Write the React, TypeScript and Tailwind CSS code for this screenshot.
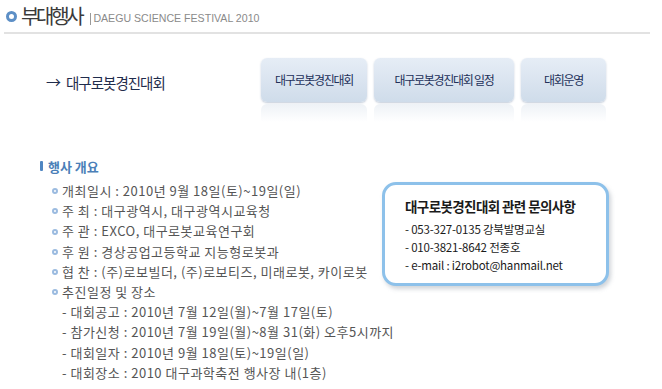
const items = [
  "개최일시 : 2010년 9월 18일(토)~19일(일)",
  "주 최 : 대구광역시, 대구광역시교육청",
  "주 관 : EXCO, 대구로봇교육연구회",
  "후 원 : 경상공업고등학교 지능형로봇과",
  "협 찬 : (주)로보빌더, (주)로보티즈, 미래로봇, 카이로봇",
  "추진일정 및 장소",
];

const schedule = [
  "- 대회공고 : 2010년 7월 12일(월)~7월 17일(토)",
  "- 참가신청 : 2010년 7월 19일(월)~8월 31(화) 오후5시까지",
  "- 대회일자 : 2010년 9월 18일(토)~19일(일)",
  "- 대회장소 : 2010 대구과학축전 행사장 내(1층)",
];

const tabs = [
  { label: "대구로봇경진대회", w: "w-[106px]" },
  { label: "대구로봇경진대회 일정", w: "w-[140px]" },
  { label: "대회운영", w: "w-[85px]" },
];

const App = () => {
  return (
    <div
      className="w-[662px] h-[389px] bg-white overflow-hidden text-[#555]"
      style={{ fontFamily: '"Noto Sans CJK KR", "Noto Sans", sans-serif' }}
    >
      {/* Title bar */}
      <div className="mx-[4px] w-[646px] h-[34px] border-b-2 border-[#e2e2e2] flex items-center pl-[2px] pb-[1px]">
        <span className="w-[11px] h-[11px] rounded-full border-[3px] border-[#5d8fc6] bg-white mt-[1px]" />
        <span className="ml-[4px] text-[20px] leading-none tracking-[-3.3px] text-[#3a3a3a]">
          부대행사
        </span>
        <span className="ml-[9px] mt-[6px] h-[12px] border-l border-[#999]" />
        <span
          className="ml-[2px] mt-[6px] text-[10.6px] leading-none text-[#8a8a8a]"
          style={{ fontFamily: '"Liberation Sans", Arial, sans-serif' }}
        >
          DAEGU SCIENCE FESTIVAL 2010
        </span>
      </div>

      {/* Sub menu row */}
      <div className="flex items-start mt-[24px]">
        <div className="ml-[46px] w-[214px] h-[44px] flex items-center pt-[5px] text-[14.5px] tracking-[-1px] text-[#1f2c4c]">
          <span className="text-[15px] mr-[6px]">→</span>
          대구로봇경진대회
        </div>
        <div className="ml-[1px] flex gap-[7px]">
          {tabs.map((t) => (
            <div key={t.label} className={`${t.w} flex flex-col`}>
              <div className="h-[44px] rounded-[6px] bg-gradient-to-b from-[#e6edf6] to-[#cfdcea] shadow-[0_1px_2px_rgba(120,140,170,0.45)] flex items-center justify-center text-[12px] tracking-[-1.3px] text-[#23315a]">
                {t.label}
              </div>
              <div className="mt-[2px] h-[18px] rounded-t-[6px] bg-gradient-to-b from-[#eef2f6] to-white" />
            </div>
          ))}
        </div>
      </div>

      {/* Overview */}
      <div className="flex mt-[36px]">
        <div className="ml-[40px] w-[342px] shrink-0 whitespace-nowrap">
          <div className="flex items-center h-[16px]">
            <span className="w-[3px] h-[10px] bg-[#4f86c2] rounded-[1px]" />
            <span className="ml-[5px] text-[13px] font-semibold text-[#4b7fb8] leading-none">
              행사 개요
            </span>
          </div>
          <div className="mt-[7px] ml-[12px] text-[13px] leading-[20.2px] tracking-[0.5px]">
            {items.map((it) => (
              <div key={it} className="flex items-center">
                <span className="w-[6px] h-[6px] rounded-full border-[2px] border-[#9bbbe0] mr-[4px]" />
                {it}
              </div>
            ))}
            {schedule.map((s) => (
              <div key={s} className="pl-[10px]">
                {s}
              </div>
            ))}
          </div>
        </div>

        <div className="mt-[24px] w-[227px] h-[104px] shrink-0 rounded-[14px] border-[3px] border-[#8dc1ea] bg-white shadow-[2px_3px_4px_rgba(150,160,170,0.45)] pl-[20px] pt-[12px] text-[#1a1a1a]">
          <div className="text-[13.5px] font-bold leading-[18px] tracking-[-0.6px]">
            대구로봇경진대회 관련 문의사항
          </div>
          <div className="mt-[5px] text-[11.5px] leading-[18px] tracking-[-0.2px]">
            <div>- 053-327-0135 강북발명교실</div>
            <div>- 010-3821-8642 전종호</div>
            <div>- e-mail : i2robot@hanmail.net</div>
          </div>
        </div>
      </div>
    </div>
  );
};

export default App;
